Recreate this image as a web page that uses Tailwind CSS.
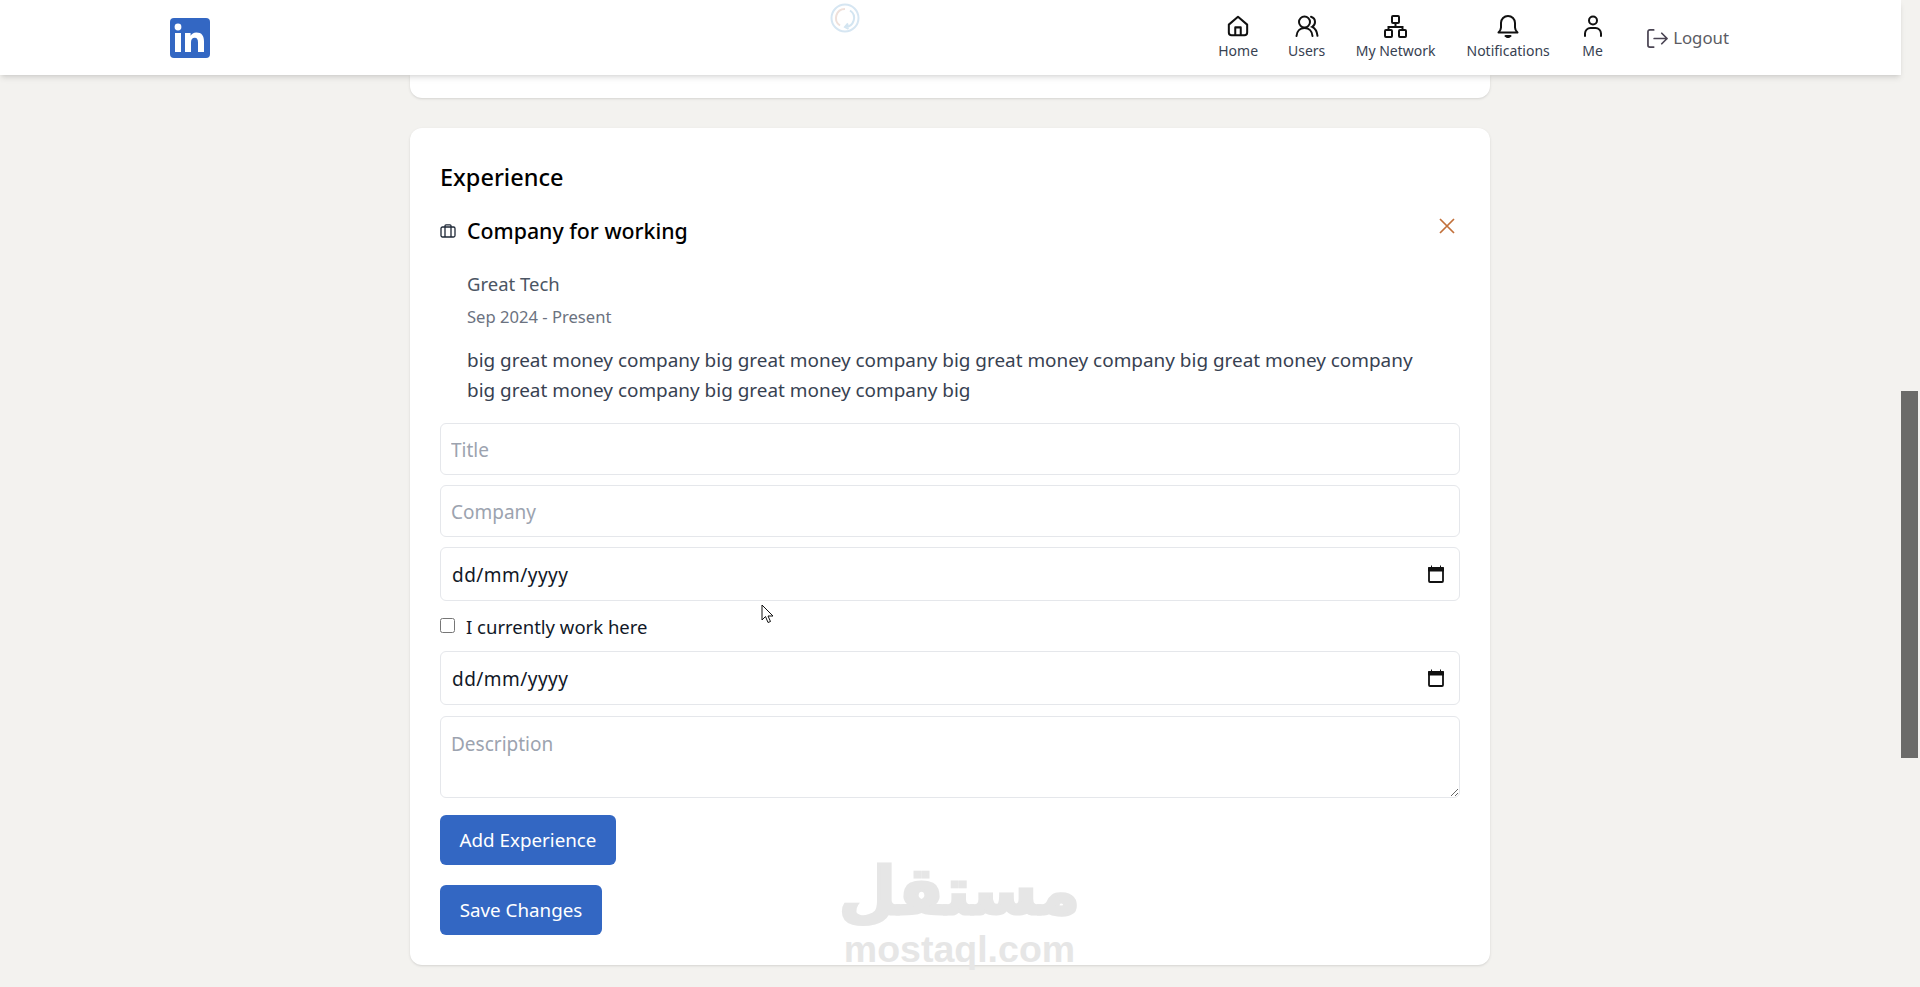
<!DOCTYPE html>
<html lang="en">
<head>
  <meta charset="UTF-8" />
  <meta name="viewport" content="width=device-width, initial-scale=1.0"/>
  <title>Edit Profile</title>
  <script src="https://cdn.jsdelivr.net/npm/@tailwindcss/browser@4"></script>
</head>
<body class="bg-[#f3f2ef] h-[987px] overflow-hidden font-['Noto_Sans',sans-serif] text-[#111827]">
<div class="flex h-[987px]">
  <div class="relative w-[1901px] shrink-0">

    <!-- navbar -->
    <header class="relative z-10 flex h-[75px] items-center justify-between bg-white pl-[170px] pr-[172px] shadow-md">
      <svg class="h-10 w-10" viewBox="0 0 40 40">
        <rect width="40" height="40" rx="4" fill="#3367c3"/>
        <rect x="5" y="15" width="6" height="19" fill="#fff"/>
        <circle cx="8" cy="9" r="3.4" fill="#fff"/>
        <path d="M15 15h5.6v2.7c1-1.8 3-3.2 5.7-3.2 5.600 0 7.700 3.400 7.700 9V34h-6v-9.500c0-2.600-.7-4.700-3.200-4.700-2.600 0-3.800 2-3.800 4.700V34h-6z" fill="#fff"/>
      </svg>
      <nav class="flex items-center text-[14px] leading-5 text-[#374151]">
        <a class="flex w-[40px] flex-col items-center">
          <svg class="mb-[4px] h-[22px] w-[22px]" viewBox="0 0 24 24" fill="none" stroke="#111" stroke-width="2.200" stroke-linejoin="round"><path d="M2 10.500 12 2l10 8.500V19a3 3 0 0 1-3 3H5a3 3 0 0 1-3-3z"/><path d="M9 22V13.500h6V22"/></svg>
          <span>Home</span>
        </a>
        <a class="ml-[31px] flex w-[35px] flex-col items-center">
          <svg class="mb-[4px] h-[22px] w-[24px]" viewBox="0 0 24 22" fill="none" stroke="#111" stroke-width="2" stroke-linecap="round"><circle cx="9.500" cy="7" r="5.500"/><path d="M1.500 21c.4-4.800 3.500-8 8-8s7.600 3.200 8 8"/><path d="M16 1.800c2.600.8 4 2.800 4 5.200 0 2-1 3.800-2.800 4.800 3 1.400 4.800 4.600 5.300 9"/></svg>
          <span>Users</span>
        </a>
        <a class="ml-[31px] flex w-[81px] flex-col items-center">
          <svg class="mb-[3px] h-[23px] w-[23px]" viewBox="0 0 23 23" fill="none" stroke="#111" stroke-width="2"><rect x="8" y="1" width="7" height="7" rx="1"/><rect x="1" y="15" width="7" height="7" rx="1"/><rect x="15" y="15" width="7" height="7" rx="1"/><path d="M11.500 8v4M4.500 15v-3h14v3"/></svg>
          <span>My Network</span>
        </a>
        <a class="ml-[31px] flex w-[82px] flex-col items-center">
          <svg class="mb-[3px] h-[23px] w-[22px]" viewBox="0 0 22 23" fill="none" stroke="#111" stroke-width="2" stroke-linejoin="round"><path d="M1.500 17.500c1.500-1.500 2.500-2.500 2.500-5V8a7 7 0 0 1 14 0v4.500c0 2.500 1 3.500 2.500 5z"/><path d="M8.500 21h5l-2.500 1.500z" fill="#111"/></svg>
          <span>Notifications</span>
        </a>
        <a class="ml-[33px] flex w-[21px] flex-col items-center">
          <svg class="mb-[4px] h-[22px] w-[18px] max-w-none" viewBox="0 0 18 22" fill="none" stroke="#111" stroke-width="2" stroke-linecap="round"><circle cx="9" cy="5.500" r="4"/><path d="M1 21v-2.500A5.500 5.500 0 0 1 6.500 13h5a5.500 5.500 0 0 1 5.500 5.500V21"/></svg>
          <span>Me</span>
        </a>
        <a class="ml-[44px] mt-[1px] flex items-center text-[16.8px] text-[#5b5b63]">
          <svg class="mr-[5px] h-[21px] w-[21px]" viewBox="0 0 22 21" fill="none" stroke="#4a4453" stroke-width="1.800" stroke-linecap="round" stroke-linejoin="round"><path d="M7 1.500H3a2 2 0 0 0-2 2v14a2 2 0 0 0 2 2h4"/><path d="M7.500 10.500H21M15.500 5l5.500 5.500-5.500 5.500"/></svg>
          <span>Logout</span>
        </a>
      </nav>
      <svg class="absolute left-[830px] top-[3px] h-[30px] w-[30px]" viewBox="0 0 30 30" fill="none" stroke-width="2">
        <circle cx="15" cy="15" r="13.500" stroke="#d6e6f2"/>
        <path d="M10 22.500A9 9 0 0 1 15 6" stroke="#efe0da"/>
        <path d="M20 7.500A9 9 0 0 1 15 24M18 20.500l-3 3.500 3.500 2" stroke="#d3e5f1"/>
      </svg>
    </header>

    <main class="ml-[410px] flex w-[1080px] flex-col gap-[30px]">
      <div class="h-[23px] rounded-b-xl bg-white shadow-sm"></div>

      <section class="relative flex h-[837px] flex-col rounded-xl bg-white p-[30px] shadow-sm">
        <h2 class="text-[23.5px] font-medium leading-[38px] text-black">Experience</h2>

        <div class="relative mt-[19px]">
          <div class="flex items-center gap-[11px]">
            <svg class="h-4 w-4" viewBox="0 0 16 16" fill="none" stroke="#1f2937" stroke-width="1.300"><rect x="1" y="4" width="14" height="10" rx="1.500"/><path d="M5 14V2.800A1 1 0 0 1 6 1.800h4a1 1 0 0 1 1 1V14"/></svg>
            <h3 class="text-[21.3px] font-medium leading-8 text-black">Company for working</h3>
          </div>
          <button class="absolute right-[5px] top-[3px]">
            <svg class="h-[16px] w-[16px]" viewBox="0 0 16 16" fill="none" stroke="#c2703a" stroke-width="1.700"><path d="M1 1l14 14M15 1 1 15"/></svg>
          </button>
          <div class="ml-[27px]">
            <p class="mt-[23px] text-[18.5px] leading-7 text-[#4b5563]">Great Tech</p>
            <p class="mt-[7px] text-[16.6px] leading-6 text-[#6b7280]">Sep 2024 - Present</p>
            <p class="mt-[16px] w-[960px] text-[18.93px] leading-[30px] text-[#374151]">big great money company big great money company big great money company big great money company big great money company big great money company big</p>
          </div>
        </div>

        <div class="mt-[18px] flex flex-col gap-[10px] text-[19px]">
          <input class="h-[52px] w-full rounded-md border border-[#e5e7eb] px-[10px] pt-[2px] placeholder:text-[#9ca3af]" placeholder="Title" />
          <input class="h-[52px] w-full rounded-md border border-[#e5e7eb] px-[10px] pt-[2px] placeholder:text-[#9ca3af]" placeholder="Company" />
          <div class="relative">
            <input class="h-[54px] w-full rounded-md border border-[#e5e7eb] px-[11px] pt-[2px] tracking-[0.45px] text-[#111827]" value="dd/mm/yyyy" />
            <svg class="absolute right-[16px] top-[18px] h-[18px] w-[16px]" viewBox="0 0 16 18" fill="none"><rect x="1" y="3" width="14" height="14" stroke="#111" stroke-width="1.800" rx="1"/><path d="M0.500 2.500h15V6H.5zM3.500 0.500v2M12.500 0.500v2" fill="#111" stroke="#111"/></svg>
          </div>
          <label class="flex h-[30px] items-center gap-[11px] pt-[1px] text-[18.5px] text-[#111827]">
            <input type="checkbox" class="mb-[3px] h-[15px] w-[15px]" />
            <span>I currently work here</span>
          </label>
          <div class="relative">
            <input class="h-[54px] w-full rounded-md border border-[#e5e7eb] px-[11px] pt-[2px] tracking-[0.45px] text-[#111827]" value="dd/mm/yyyy" />
            <svg class="absolute right-[16px] top-[18px] h-[18px] w-[16px]" viewBox="0 0 16 18" fill="none"><rect x="1" y="3" width="14" height="14" stroke="#111" stroke-width="1.800" rx="1"/><path d="M0.500 2.500h15V6H.5zM3.500 0.500v2M12.500 0.500v2" fill="#111" stroke="#111"/></svg>
          </div>
          <textarea class="mt-[1px] h-[82px] w-full rounded-md border border-[#e5e7eb] px-[10px] py-[13px] placeholder:text-[#9ca3af]" placeholder="Description"></textarea>
        </div>

        <button class="mt-[17px] h-[50px] w-[176px] rounded-md bg-[#3367c3] pt-[1px] text-[18.8px] text-white">Add Experience</button>
        <button class="mt-[20px] h-[50px] w-[162px] rounded-md bg-[#3367c3] pt-[1px] text-[18.8px] text-white">Save Changes</button>

        <!-- watermark -->
        <div class="pointer-events-none absolute left-[435px] top-[728px] flex w-[229px] flex-col items-center font-bold text-[#e6e6e6]">
          <span class="font-['DejaVu_Sans',sans-serif] text-[66px] leading-[72px] [-webkit-text-stroke:3px_#e6e6e6]">مستقل</span>
          <span class="mt-[4px] font-['Liberation_Sans',sans-serif] text-[37.5px] leading-[34px]">mostaql.com</span>
        </div>
      </section>
    </main>

    <!-- mouse pointer -->
    <svg class="absolute left-[761px] top-[604px] h-[20px] w-[14px]" viewBox="0 0 14 20" fill="#fff" stroke="#111" stroke-width="1"><path d="M1 1v15l3.500-3.500L7 18.500l2.500-1-2.500-5.500h5z"/></svg>
  </div>

  <!-- scrollbar -->
  <div class="relative w-[19px]">
    <div class="absolute left-0 top-[391px] h-[367px] w-[17px] bg-[#6b6b69]"></div>
  </div>
</div>
</body>
</html>
